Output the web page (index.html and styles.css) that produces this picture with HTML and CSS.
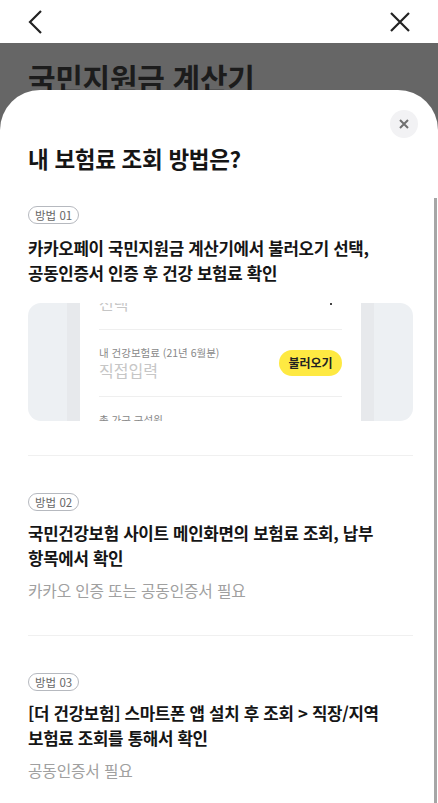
FILE: index.html
```html
<!DOCTYPE html>
<html lang="ko">
<head>
  <meta charset="UTF-8" />
  <meta name="viewport" content="width=device-width, initial-scale=1.0"/>
  <title>국민지원금 계산기</title>
  <link rel="stylesheet" href="styles.css">
</head>
<body>
  <header class="topbar">
    <button class="icon-btn" aria-label="뒤로">
      <svg width="16" height="24" viewBox="0 0 16 24"><path d="M14 1 L3 12 L14 23" fill="none" stroke="#222" stroke-width="2.2"/></svg>
    </button>
    <button class="icon-btn" aria-label="닫기">
      <svg width="20" height="20" viewBox="0 0 20 20"><path d="M1 1 L19 19 M19 1 L1 19" fill="none" stroke="#222" stroke-width="2.2"/></svg>
    </button>
  </header>

  <div class="backdrop">
    <h1 class="page-title">국민지원금 계산기</h1>

    <div class="sheet">
      <div class="scroll-thumb"></div>
      <div class="sheet-head">
        <button class="sheet-close" aria-label="닫기">
          <svg width="10" height="10" viewBox="0 0 10 10"><path d="M1 1 L9 9 M9 1 L1 9" fill="none" stroke="#707070" stroke-width="2"/></svg>
        </button>
      </div>
      <h2 class="sheet-title">내 보험료 조회 방법은?</h2>

      <section class="method first">
        <span class="badge">방법 01</span>
        <p class="method-title">카카오페이 국민지원금 계산기에서 불러오기 선택,<br>공동인증서 인증 후 건강 보험료 확인</p>
        <div class="preview">
          <div class="phone">
            <div class="phone-inner">
              <div class="row">
                <span class="value">선택</span>
                <span class="dot"></span>
              </div>
              <div class="row">
                <div>
                  <div class="label">내 건강보험료 (21년 6월분)</div>
                  <div class="value">직접입력</div>
                </div>
                <span class="load-btn">불러오기</span>
              </div>
              <div class="row">
                <div class="label">총 가구 구성원</div>
              </div>
            </div>
          </div>
        </div>
      </section>

      <section class="method">
        <span class="badge">방법 02</span>
        <p class="method-title">국민건강보험 사이트 메인화면의 보험료 조회, 납부<br>항목에서 확인</p>
        <p class="method-note">카카오 인증 또는 공동인증서 필요</p>
      </section>

      <section class="method last">
        <span class="badge">방법 03</span>
        <p class="method-title">[더 건강보험] 스마트폰 앱 설치 후 조회 &gt; 직장/지역<br>보험료 조회를 통해서 확인</p>
        <p class="method-note">공동인증서 필요</p>
      </section>
    </div>
  </div>
</body>
</html>
```

FILE: styles.css
```css
:root {
  --text: #151515;
  --muted: #a0a0a0;
  --line: #f0f0f0;
  --font: 'Noto Sans CJK KR', 'Noto Sans', sans-serif;
}

html, body {
  margin: 0;
  height: 100%;
  overflow: hidden;
}

body {
  font-family: var(--font);
  color: var(--text);
  background-color: #666666;
}

.topbar {
  height: 43px;
  background-color: #fff;
  display: flex;
  align-items: center;
  justify-content: space-between;
  padding: 0 28px 0 27px;
}

.icon-btn {
  border: none;
  background: none;
  padding: 0;
  display: flex;
}

.backdrop {
  background-color: #666666;
  padding-top: 17px;
}

.page-title {
  margin: 0;
  padding-left: 28px;
  height: 30px;
  font-size: 30px;
  line-height: 34px;
  font-weight: 700;
  letter-spacing: -0.3px;
  color: #1c1c1c;
}

.sheet {
  position: relative;
  z-index: 1;
  background-color: #fff;
  border-radius: 40px 40px 0 0;
  padding: 20px 25px 40px 28px;
}

.scroll-thumb {
  position: absolute;
  top: 108px;
  right: 1px;
  bottom: 0;
  width: 3px;
  background-color: #a6a6a6;
}

.sheet-head {
  display: flex;
  justify-content: flex-end;
  margin-right: -5px;
}

.sheet-close {
  width: 28px;
  height: 28px;
  border: none;
  border-radius: 50%;
  background-color: #f2f2f4;
  display: flex;
  align-items: center;
  justify-content: center;
  padding: 0;
}

.sheet-title {
  margin: 5px 0 0;
  font-size: 22.5px;
  line-height: 30px;
  font-weight: 700;
  letter-spacing: -0.3px;
}

.method {
  display: flex;
  flex-direction: column;
  align-items: flex-start;
  padding: 37px 0 33px;
  border-bottom: 1px solid var(--line);
}

.method.first {
  padding-top: 33px;
  padding-bottom: 34px;
  align-items: stretch;
}

.method.last {
  border-bottom: none;
}

.badge {
  align-self: flex-start;
  height: 16px;
  line-height: 16px;
  padding: 0 6px;
  border: 1px solid #b6b9bf;
  border-radius: 9px;
  font-size: 11.5px;
  color: #666;
}

.method-title {
  margin: 10px 0 0;
  font-size: 16.8px;
  line-height: 25px;
  font-weight: 600;
  letter-spacing: -0.3px;
}

.method.first .method-title {
  margin-top: 12px;
}

.method-note {
  margin: 9px 0 0;
  font-size: 15.8px;
  line-height: 22px;
  color: var(--muted);
  letter-spacing: -0.2px;
}

/* screenshot of the calculator */
.preview {
  margin-top: 17px;
  height: 118px;
  background-color: #edf0f3;
  border-radius: 13px;
  padding: 0 39px;
  overflow: hidden;
}

.phone {
  height: 100%;
  background-color: #fff;
  border-left: 13px solid #e7e9ec;
  border-right: 13px solid #e7e9ec;
  overflow: hidden;
}

.phone-inner {
  margin-top: -10px;
  padding: 0 19px 0 19px;
}

.row {
  display: flex;
  align-items: center;
  justify-content: space-between;
  padding: 15px 0 16px;
  border-bottom: 1px solid #efefef;
}

.row:first-child {
  padding-top: 0;
  align-items: flex-start;
}

.label {
  font-size: 10.5px;
  line-height: 15px;
  color: #888;
}

.value {
  font-size: 16px;
  line-height: 20px;
  color: #c6c6c6;
}

.dot {
  width: 2px;
  height: 2px;
  margin-top: 10px;
  margin-right: 10px;
  background-color: #444;
}

.load-btn {
  width: 63px;
  height: 26px;
  line-height: 26px;
  text-align: center;
  border-radius: 13px;
  background-color: #fee942;
  font-size: 12px;
  font-weight: 700;
  color: #222;
}
```
